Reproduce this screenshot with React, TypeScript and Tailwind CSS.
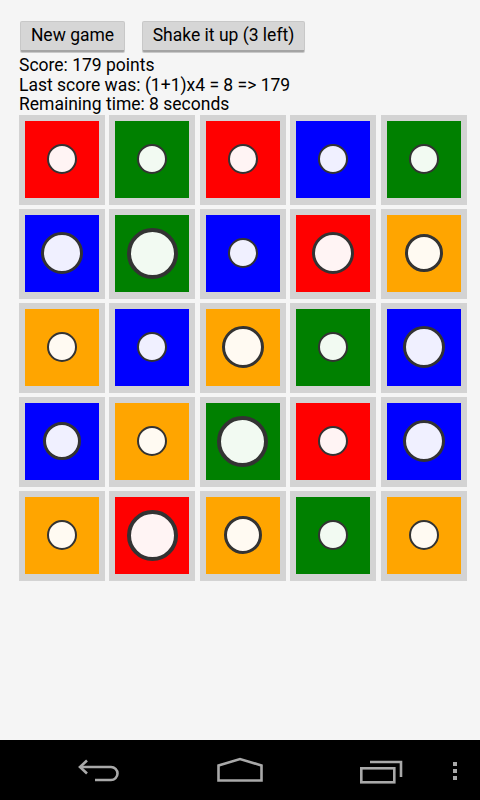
type Tile = { color: 'red' | 'green' | 'blue' | 'orange'; size: 's' | 'm' | 'l' | 'xl' }

const board: Tile[][] = [
  [
    { color: 'red', size: 's' },
    { color: 'green', size: 's' },
    { color: 'red', size: 's' },
    { color: 'blue', size: 's' },
    { color: 'green', size: 's' },
  ],
  [
    { color: 'blue', size: 'l' },
    { color: 'green', size: 'xl' },
    { color: 'blue', size: 's' },
    { color: 'red', size: 'l' },
    { color: 'orange', size: 'm' },
  ],
  [
    { color: 'orange', size: 's' },
    { color: 'blue', size: 's' },
    { color: 'orange', size: 'l' },
    { color: 'green', size: 's' },
    { color: 'blue', size: 'l' },
  ],
  [
    { color: 'blue', size: 'm' },
    { color: 'orange', size: 's' },
    { color: 'green', size: 'xl' },
    { color: 'red', size: 's' },
    { color: 'blue', size: 'l' },
  ],
  [
    { color: 'orange', size: 's' },
    { color: 'red', size: 'xl' },
    { color: 'orange', size: 'm' },
    { color: 'green', size: 's' },
    { color: 'orange', size: 's' },
  ],
]

const bg = {
  red: 'bg-[#ff0000]',
  green: 'bg-[#008000]',
  blue: 'bg-[#0000ff]',
  orange: 'bg-[#ffa500]',
}

const fill = {
  red: 'bg-[#fff4f4]',
  green: 'bg-[#f2faf2]',
  blue: 'bg-[#f0f0ff]',
  orange: 'bg-[#fffaf2]',
}

const dot = {
  s: 'w-[30px] h-[30px] border-2',
  m: 'w-[38px] h-[38px] border-[3px]',
  l: 'w-[42px] h-[42px] border-[3.5px]',
  xl: 'w-[51px] h-[51px] border-4',
}

function Cell({ t }: { t: Tile }) {
  return (
    <div className="h-[90px] bg-[#d3d3d3] p-[6px] pb-[7px]">
      <div className={`w-full h-full flex items-center justify-center ${bg[t.color]}`}>
        <div className={`rounded-full border-[#333333] ${dot[t.size]} ${fill[t.color]}`} />
      </div>
    </div>
  )
}

function NavBar() {
  return (
    <div className="h-[60px] bg-black relative">
      {/* back */}
      <svg className="absolute left-[77px] top-[18px]" width="46" height="26" viewBox="0 0 46 26" fill="none" stroke="#a9a9a9" strokeWidth="2.6">
        <path d="M3 9 H34 A6.5 6.5 0 0 1 34 22 H18" />
        <path d="M10 2.5 L3 9 L10 15.5" />
      </svg>
      {/* home */}
      <svg className="absolute left-[215px] top-[17px]" width="50" height="26" viewBox="0 0 50 26" fill="none" stroke="#a9a9a9" strokeWidth="2.6">
        <path d="M3.5 8.5 L25 2 L46.5 8.5 V23.5 H3.5 Z" strokeLinejoin="miter" />
      </svg>
      {/* recent */}
      <svg className="absolute left-[358px] top-[19px]" width="48" height="26" viewBox="0 0 48 26" fill="none" stroke="#a9a9a9" strokeWidth="2.6">
        <path d="M12 3 H43 V18" />
        <rect x="3.3" y="9.3" width="33" height="14" />
      </svg>
      {/* menu */}
      <div className="absolute left-[453px] top-[22px] flex flex-col gap-[3px]">
        <div className="w-[4px] h-[4px] bg-[#a9a9a9]" />
        <div className="w-[4px] h-[4px] bg-[#a9a9a9]" />
        <div className="w-[4px] h-[4px] bg-[#a9a9a9]" />
      </div>
    </div>
  )
}

export default function App() {
  return (
    <div className="w-[480px] h-[800px] flex flex-col bg-[#f5f5f5] text-black" style={{ fontFamily: 'Roboto, "Noto Sans", sans-serif' }}>
      <div className="flex-1 pt-[22px]">
        <div className="flex gap-[19px] pl-[21px]">
          <button className="h-[30px] w-[103px] bg-[#d6d6d6] border-b-2 border-[#a4a4a4] rounded-[1px] shadow-[0_0_0_1px_#c8c8c8] text-[17.5px] leading-none text-black">
            New game
          </button>
          <button className="h-[30px] w-[161px] bg-[#d6d6d6] border-b-2 border-[#a4a4a4] rounded-[1px] shadow-[0_0_0_1px_#c8c8c8] text-[17.5px] leading-none text-black">
            Shake it up (3 left)
          </button>
        </div>
        <div className="pl-[19px] mt-[4px] text-[17.5px] leading-[19.5px]">
          <div>Score: 179 points</div>
          <div>Last score was: (1+1)x4 = 8 =&gt; 179</div>
          <div>Remaining time: 8 seconds</div>
        </div>
        <div className="ml-[18.7px] w-[448px] grid grid-cols-5 gap-x-[4.5px] gap-y-[4px]">
          {board.flat().map((t, i) => (
            <Cell key={i} t={t} />
          ))}
        </div>
      </div>
      <NavBar />
    </div>
  )
}
